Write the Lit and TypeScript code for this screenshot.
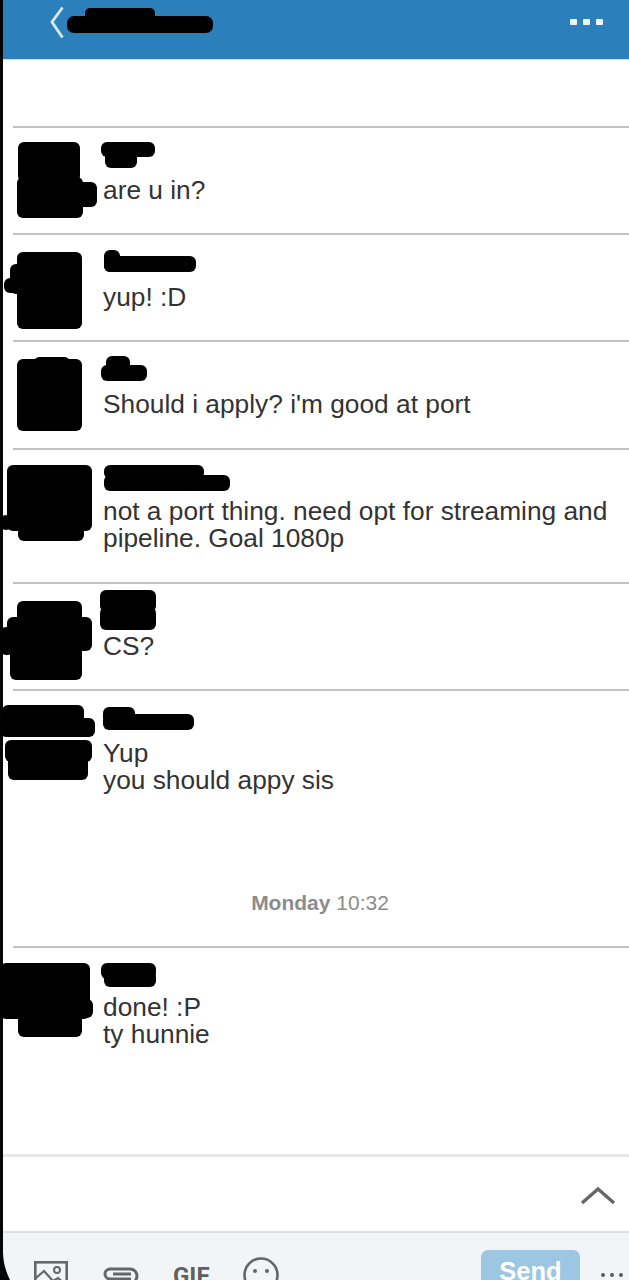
import { LitElement, html, css, svg } from "lit";
import { customElement } from "lit/decorators.js";

type R = [number, number, number, number];
interface Msg { lines: string[]; blobs: R[]; short?: boolean }

// Scribbled-out avatars and names: [x, y, w, h], x from the page edge, y from the row's rule.
const MSGS: Msg[] = [
  { lines: ["are u in?"], blobs: [[18,15,62,40],[17,50,66,41],[60,55,37,25],[101,15,54,15],[105,22,32,19]] },
  { lines: ["yup! :D"], blobs: [[17,18,65,77],[4,44,16,15],[10,30,14,30],[104,16,16,22],[104,22,92,16]] },
  { lines: ["Should i apply? i'm good at port"], blobs: [[17,18,65,72],[34,16,36,10],[101,24,46,16],[106,15,24,16]] },
  { lines: ["not a port thing. need opt for streaming and", "pipeline. Goal 1080p"], blobs: [[7,16,85,66],[18,60,66,32],[0,66,12,15],[104,16,100,14],[104,26,126,16]] },
  { lines: ["CS?"], blobs: [[17,18,65,30],[7,34,85,34],[10,62,72,35],[0,44,14,28],[100,7,56,22],[100,24,56,23]] },
  { lines: ["Yup", "you should appy sis"], blobs: [[2,15,82,32],[0,28,95,19],[5,50,87,22],[8,55,80,35],[103,17,32,16],[103,24,91,16]] },
];
const LAST: Msg = {
  lines: ["done! :P", "ty hunnie"], short: true,
  blobs: [[0,16,90,56],[40,52,53,19],[18,60,64,30],[101,16,55,16],[104,24,52,16]],
};

@customElement("app-root")
export class AppRoot extends LitElement {
  static styles = css`
    :host { display: block; width: 629px; height: 1280px; overflow: hidden; position: relative; background: #fff;
      font-family: "Liberation Sans", Arial, sans-serif; color: #333; }
    .page { height: 1280px; display: flex; flex-direction: column; border-left: 3px solid #050505; box-sizing: border-box; }
    .top { flex: none; height: 59px; background: #2b7fbb; display: flex; align-items: center; justify-content: space-between;
      padding: 0 26px 0 46px; position: relative; border-bottom: 1px solid #cfe2f0; box-sizing: content-box; }
    .back { width: 16px; height: 34px; margin-top: -14px; }
    .dots { display: flex; gap: 6px; margin-top: -15px; }
    .dots i { display: block; width: 7px; height: 6px; background: #eef4f9; border-radius: 1px; }
    .title { position: absolute; left: -3px; top: 0; overflow: visible; }
    .list { flex: none; padding-top: 66px; }
    .msg { position: relative; margin-left: 10px; border-top: 2px solid #c2c2c2; padding: 48.5px 0 29.5px 90px;
      font-size: 26.3px; line-height: 27.2px; }
    .msg.short { padding-top: 46.5px; }
    .msg p { margin: 0; white-space: nowrap; }
    .ink { position: absolute; left: -13px; top: -1px; overflow: visible; }
    .stamp { margin: 0; text-align: center; font-size: 21px; line-height: 26px; color: #8c8c8c; padding: 66px 0 30px 8px; }
    .stamp b { font-weight: 700; }
    .spacer { flex: 1; }
    .compose { flex: none; height: 77px; box-sizing: border-box; border-top: 3px solid #e8e8e8; display: flex; align-items: center; justify-content: flex-end;
      padding: 0 13px 0 0; }
    .chev { width: 36px; height: 20px; margin-top: 3px; }
    .tools { flex: none; height: 49px; box-sizing: border-box; border-top: 2px solid #dedede; background: #f2f5f8; display: flex; align-items: flex-start;
      padding: 17px 6px 0 31px; overflow: hidden; }
    .ico { flex: none; display: block; overflow: visible; }
    .image { margin-top: 11px; }
    .clip { margin: 14px 0 0 33px; }
    .gif { flex: none; width: 36px; font: 700 24px/30px Roboto, "Liberation Sans", sans-serif; color: #5f5f5f; margin: 11px 0 0 34px; }
    .smile { margin: 7px 0 0 34px; }
    .send { flex: none; width: 99px; height: 60px; margin-left: auto; background: #9dc6e2; color: #fff; border-radius: 7px;
      font-size: 25.5px; font-weight: 700; text-align: center; line-height: 42px; }
    .more { flex: none; width: 22px; margin-left: 21px; display: flex; gap: 5px; padding-top: 23px; }
    .more i { display: block; width: 4px; height: 4px; border-radius: 50%; background: #5c5c5c; }
    .corner { position: absolute; left: 0; bottom: 0; }
  `;

  private ink(blobs: R[]) {
    return html`<svg class="ink" width="240" height="100" aria-hidden="true">
      ${blobs.map(([x, y, w, h]) => svg`<rect x=${x} y=${y} width=${w} height=${h} rx="6" fill="#000" />`)}
    </svg>`;
  }

  private row(m: Msg) {
    return html`<div class="msg ${m.short ? "short" : ""}">
      ${this.ink(m.blobs)}
      ${m.lines.map((l) => html`<p>${l}</p>`)}
    </div>`;
  }

  render() {
    return html`
      <div class="page">
        <header class="top">
          <svg class="back" viewBox="0 0 16 34" fill="none" stroke="#dbe9f3" stroke-width="2.8">
            <path d="M13.5 1.5 3 16l10.5 15.5" />
          </svg>
          <svg class="title" width="240" height="59" aria-hidden="true">
            <rect x="85" y="8" width="70" height="14" rx="5" fill="#000" />
            <rect x="67" y="16" width="146" height="17" rx="7" fill="#000" />
          </svg>
          <div class="dots"><i></i><i></i><i></i></div>
        </header>
        <section class="list">
          ${MSGS.map((m) => this.row(m))}
          <p class="stamp"><b>Monday</b> 10:32</p>
          ${this.row(LAST)}
        </section>
        <div class="spacer"></div>
        <div class="compose">
          <svg class="chev" viewBox="0 0 36 20" fill="none" stroke="#666" stroke-width="3.4">
            <path d="M2 17 18 3l16 14" />
          </svg>
        </div>
        <footer class="tools">
          <svg class="ico image" width="34" height="34" viewBox="0 0 34 34" fill="none" stroke="#666" stroke-width="2.6">
            <rect x="1.3" y="1.3" width="31.4" height="31.4" />
            <circle cx="23" cy="9" r="3" stroke-width="2" />
            <path d="M2 17 10 10l9 10 5-3 9 8" stroke-width="2.2" />
          </svg>
          <svg class="ico clip" width="38" height="24" viewBox="0 0 38 24" fill="none" stroke="#666" stroke-width="3">
            <path d="M30 15H9a5 5 0 0 1 0-10h20a7 7 0 0 1 0 14H9" />
            <path d="M12 10h18" />
          </svg>
          <span class="gif">GIF</span>
          <svg class="ico smile" width="36" height="36" viewBox="0 0 36 36" fill="none" stroke="#666" stroke-width="2.6">
            <circle cx="18" cy="18" r="16.5" />
            <circle cx="12" cy="14" r="2" fill="#666" stroke="none" />
            <circle cx="24" cy="14" r="2" fill="#666" stroke="none" />
          </svg>
          <div class="send">Send</div>
          <div class="more"><i></i><i></i><i></i></div>
        </footer>
      </div>
      <svg class="corner" width="12" height="28" aria-hidden="true"><path d="M0 0h3c0 10 3 20 7 28H0z" fill="#050505" /></svg>
    `;
  }
}
